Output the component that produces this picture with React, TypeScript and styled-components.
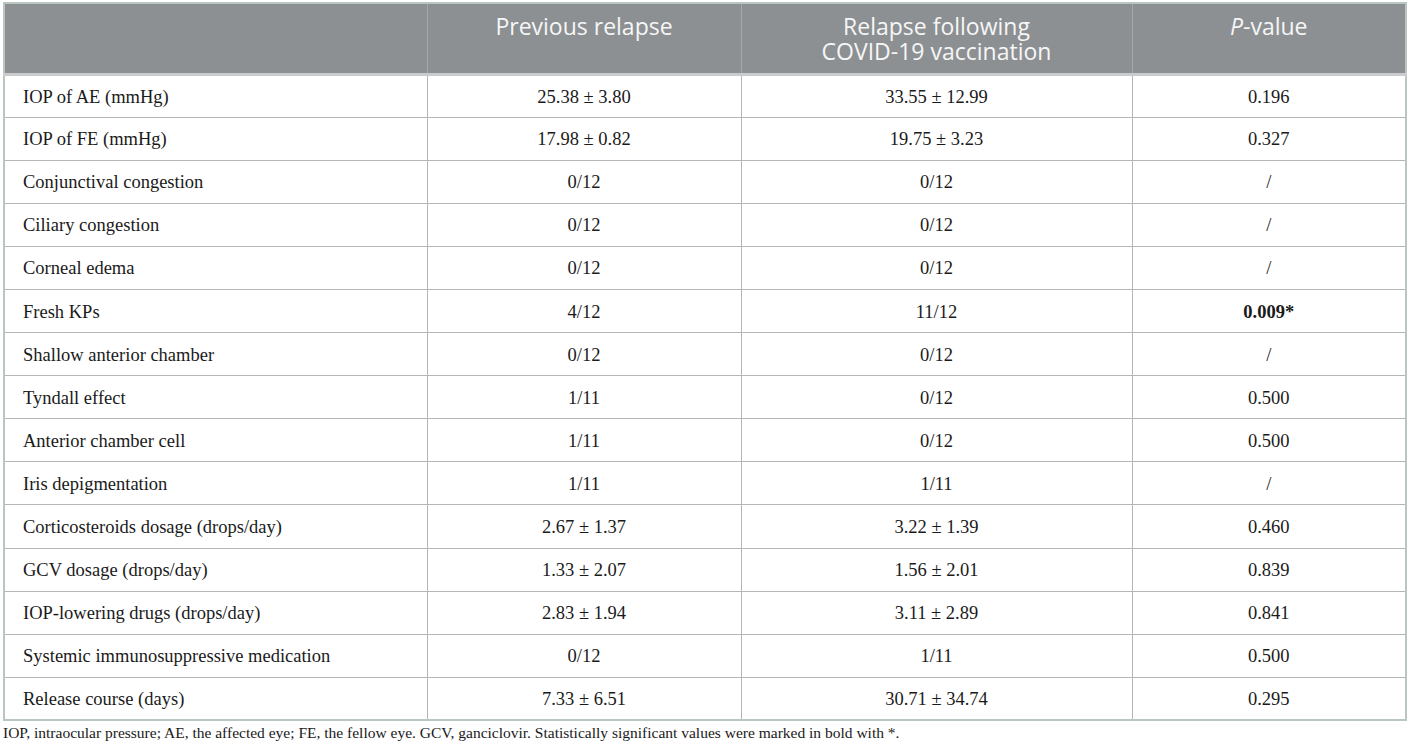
import React from "react";
import styled, { createGlobalStyle } from "styled-components";

const rows: [string, string, string, string, boolean?][] = [
    ["IOP of AE (mmHg)", "25.38 ± 3.80", "33.55 ± 12.99", "0.196"],
    ["IOP of FE (mmHg)", "17.98 ± 0.82", "19.75 ± 3.23", "0.327"],
    ["Conjunctival congestion", "0/12", "0/12", "/"],
    ["Ciliary congestion", "0/12", "0/12", "/"],
    ["Corneal edema", "0/12", "0/12", "/"],
    ["Fresh KPs", "4/12", "11/12", "0.009*", true],
    ["Shallow anterior chamber", "0/12", "0/12", "/"],
    ["Tyndall effect", "1/11", "0/12", "0.500"],
    ["Anterior chamber cell", "1/11", "0/12", "0.500"],
    ["Iris depigmentation", "1/11", "1/11", "/"],
    ["Corticosteroids dosage (drops/day)", "2.67 ± 1.37", "3.22 ± 1.39", "0.460"],
    ["GCV dosage (drops/day)", "1.33 ± 2.07", "1.56 ± 2.01", "0.839"],
    ["IOP-lowering drugs (drops/day)", "2.83 ± 1.94", "3.11 ± 2.89", "0.841"],
    ["Systemic immunosuppressive medication", "0/12", "1/11", "0.500"],
    ["Release course (days)", "7.33 ± 6.51", "30.71 ± 34.74", "0.295"],
];

function App() {
    return (
        <Page>
            <GlobalStyle />
            <Table>
                <colgroup>
                    <col style={{ width: 423 }} />
                    <col style={{ width: 314 }} />
                    <col style={{ width: 391 }} />
                    <col style={{ width: 274 }} />
                </colgroup>
                <thead>
                    <HeadRow>
                        <Th />
                        <Th>Previous relapse</Th>
                        <Th>
                            Relapse following
                            <br />
                            COVID-19 vaccination
                        </Th>
                        <Th>
                            <i>P</i>-value
                        </Th>
                    </HeadRow>
                </thead>
                <tbody>
                    {rows.map((r, idx) => (
                        <BodyRow key={idx}>
                            <Label>{r[0]}</Label>
                            <Cell>{r[1]}</Cell>
                            <Cell>{r[2]}</Cell>
                            <Cell $bold={r[4]}>{r[3]}</Cell>
                        </BodyRow>
                    ))}
                </tbody>
            </Table>
            <Note>
                IOP, intraocular pressure; AE, the affected eye; FE, the fellow eye. GCV, ganciclovir. Statistically
                significant values were marked in bold with *.
            </Note>
        </Page>
    );
}

export default App;

const GlobalStyle = createGlobalStyle`
    body {
        margin: 0;
        background: #fff;
    }
`;

const Page = styled.div`
    padding: 2px 4px 0 3px;
    font-family: "Liberation Serif", "Times New Roman", serif;
    color: #1a1a1a;
`;

const Table = styled.table`
    border-collapse: collapse;
    table-layout: fixed;
    width: 1404px;
    border: 2px solid #b9c7c0;
`;

const HeadRow = styled.tr`
    height: 71px;
`;

const BodyRow = styled.tr`
    height: 43.1px;
`;

const Th = styled.th`
    box-sizing: border-box;
    background: #8c9093;
    color: #f6f6f6;
    font-family: "Open Sans", "Noto Sans", sans-serif;
    font-weight: 400;
    font-size: 23px;
    line-height: 25px;
    text-align: center;
    vertical-align: top;
    padding: 10px 8px 0;
    border-left: 1px solid #a4a8aa;
    border-bottom: 3px solid #c9cbcc;

    &:first-child {
        border-left: none;
    }
`;

const Cell = styled.td<{ $bold?: boolean }>`
    padding: 2px 8px 0;
    font-size: 18.5px;
    text-align: center;
    font-weight: ${(p) => (p.$bold ? 700 : 400)};
    border: 1.5px solid #b4b6b7;
    border-top: none;
`;

const Label = styled(Cell)`
    text-align: left;
    padding-left: 18px;
`;

const Note = styled.div`
    margin-top: 3px;
    font-size: 15.5px;
    color: #1a1a1a;
`;
